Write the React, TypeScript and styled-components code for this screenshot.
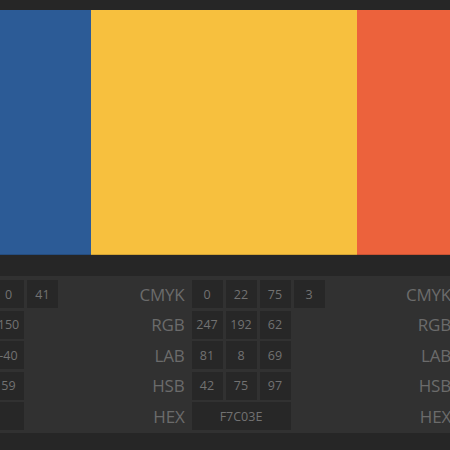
import styled, { createGlobalStyle } from 'styled-components';

const GlobalStyle = createGlobalStyle`
  html, body {
    margin: 0;
    padding: 0;
    background: #262626;
    overflow: hidden;
  }
  body {
    font-family: "Open Sans", "Noto Sans", sans-serif;
  }
`;

type Swatch = {
  hex: string;
  cmyk: number[];
  rgb: number[];
  lab: number[];
  hsb: number[];
};

const swatches: Swatch[] = [
  { hex: '2C5B96', cmyk: [71, 39, 0, 41], rgb: [44, 91, 150], lab: [38, 3, -40], hsb: [213, 71, 59] },
  { hex: 'F7C03E', cmyk: [0, 22, 75, 3], rgb: [247, 192, 62], lab: [81, 8, 69], hsb: [42, 75, 97] },
  { hex: 'EC623C', cmyk: [0, 58, 75, 7], rgb: [236, 98, 60], lab: [61, 52, 51], hsb: [13, 75, 93] },
];

const Page = styled.div`
  width: 450px;
  height: 450px;
  padding-top: 10px;
  box-sizing: border-box;
  background: #262626;
  overflow: hidden;
`;

const Strip = styled.div`
  display: flex;
  margin-left: -176px;
`;

const Column = styled.div`
  flex: 0 0 266.5px;
  display: flex;
  flex-direction: column;
`;

const Color = styled.div<{ $hex: string }>`
  height: 245px;
  background: #${(p) => p.$hex};
  box-shadow: inset 0 -1px 0 rgba(0, 0, 0, 0.15);
`;

const Details = styled.div`
  margin-top: 21px;
  height: 157px;
  box-sizing: border-box;
  padding: 4px 0 3px;
  background: #313131;
  display: flex;
  flex-direction: column;
  gap: 2.5px;
`;

const Row = styled.div`
  display: flex;
  align-items: center;
  height: 28px;
  gap: 3px;
`;

const Label = styled.div`
  width: 94px;
  margin-right: 4px;
  text-align: right;
  font-size: 17px;
  color: #6b6b6b;
  letter-spacing: -0.2px;
`;

const Cell = styled.div<{ $span?: number }>`
  width: ${(p) => (p.$span ? p.$span * 31 + (p.$span - 1) * 3 : 31)}px;
  height: 28px;
  background: #272727;
  color: #727272;
  font-size: 12.5px;
  display: flex;
  align-items: center;
  justify-content: center;
`;

const Values = ({ label, values }: { label: string; values: number[] }) => (
  <Row>
    <Label>{label}</Label>
    {values.map((v, i) => (
      <Cell key={i}>{v}</Cell>
    ))}
  </Row>
);

const App = () => (
  <Page>
    <GlobalStyle />
    <Strip>
      {swatches.map((s) => (
        <Column key={s.hex}>
          <Color $hex={s.hex} />
          <Details>
            <Values label="CMYK" values={s.cmyk} />
            <Values label="RGB" values={s.rgb} />
            <Values label="LAB" values={s.lab} />
            <Values label="HSB" values={s.hsb} />
            <Row>
              <Label>HEX</Label>
              <Cell $span={3}>{s.hex}</Cell>
            </Row>
          </Details>
        </Column>
      ))}
    </Strip>
  </Page>
);

export default App;
